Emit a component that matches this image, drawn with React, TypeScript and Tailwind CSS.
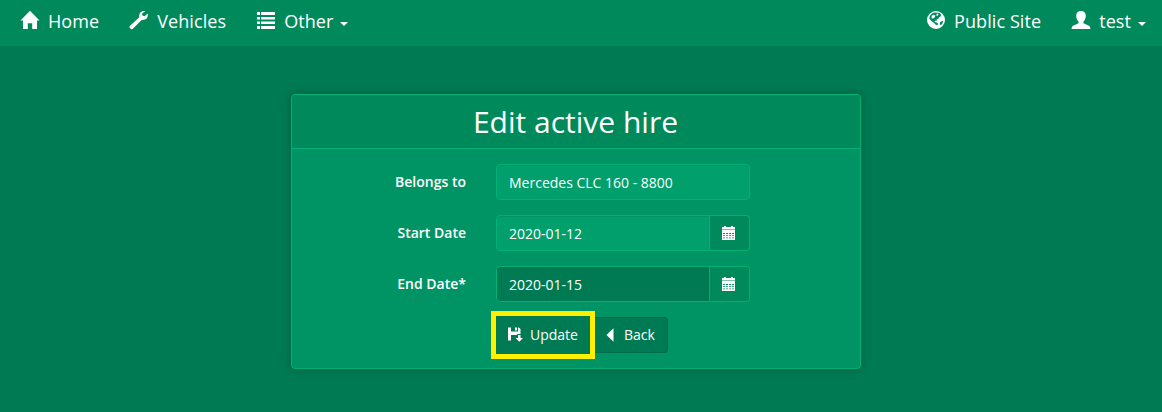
import type { ReactNode } from 'react';

type IconProps = { className?: string };

const HomeIcon = ({ className }: IconProps) => (
  <svg className={className} width="20" height="20" viewBox="0 0 20 20" fill="currentColor">
    <path d="M10 .8 19.5 10.6H17V19H12.2V13.3H7.8V19H3V10.6H.5Z" />
  </svg>
);

const WrenchIcon = ({ className }: IconProps) => (
  <svg className={className} width="20" height="20" viewBox="0 0 20 20" fill="currentColor">
    <path d="M16.2 1.3C13.7.4 11 2 10.4 4.4 10.1 5.8 10.5 7 10.1 7.6L.8 16.1C.3 16.6.3 17.3.8 17.8L1.9 18.9C2.4 19.4 3.1 19.4 3.6 18.9L12.1 10.6C13 9.8 14.4 10.1 15.9 9.600 18.1 8.8 19.4 6 18.6 3.500L15.6 6.2 13.3 5.4 13.1 3.500Z" />
  </svg>
);

const ListIcon = ({ className }: IconProps) => (
  <svg className={className} width="20" height="20" viewBox="0 0 20 20" fill="currentColor">
    <path d="M1 2h3v3H1zM5 2h14v3H5zM1 7h3v2.4H1zM5 7h14v2.4H5zM1 11.6h3V14H1zM5 11.6h14V14H5zM1 16h3v3H1zM5 16h14v3H5z" />
  </svg>
);

const GlobeIcon = ({ className }: IconProps) => (
  <svg className={className} width="20" height="20" viewBox="0 0 20 20" fill="currentColor">
    <path
      fillRule="evenodd"
      d="M10 1a9 9 0 1 0 0 18A9 9 0 0 0 10 1ZM5.200 4.200 7.500 2.800 10 2.400 13.500 3.100 15.200 4.800 14.600 6.600 12.900 7.400 12.500 8.800 10.700 9.200 11 10.600 9 10.700 8.600 12.100 10.500 12.500 12.200 13.800 11.400 15.200 9.800 14.800 7.600 12.600 5.300 11 3.400 8.600 3.700 6.200ZM14 12.200 16.700 10.800 17.300 11.400 16.300 13.600 14.800 15.200 13.800 14.200Z"
    />
    <path d="m5.800 5.500 2.200-.8 1.500.8-.9 2.100-1.900 1.100-1.200-.8ZM10.600 3.600l1.900.4-.8 2-1.300-.5Z" />
  </svg>
);

const UserIcon = ({ className }: IconProps) => (
  <svg className={className} width="20" height="20" viewBox="0 0 20 20" fill="currentColor">
    <path d="M10 1C7 1 5.200 3 5.200 5.700c0 2 .8 4.400 2.100 5.700.6.7.5 1.800-.3 2.200L2.100 15.700C1 16.200.7 17.400.5 19h19c-.2-1.600-.5-2.800-1.600-3.300L13 13.600c-.8-.4-.9-1.500-.3-2.200 1.300-1.300 2.100-3.700 2.100-5.700C14.800 3 13 1 10 1Z" />
  </svg>
);

const CalendarIcon = () => (
  <svg width="14" height="14" viewBox="0 0 14 14" fill="currentColor">
    <path d="M2 0h2v1h5V0h2v1h2v2H0V1h2z" />
    <path fillOpacity=".5" d="M0 3h13v1H0z" />
    <path
      fillRule="evenodd"
      d="M0 4h13v10H0zM1 7v1h2V7zM4 7v1h2V7zM7 7v1h2V7zM10 7v1h2V7zM1 9.200v.8h2v-.8zM4 9.200v.8h2v-.8zM7 9.200v.8h2v-.8zM10 9.200v.8h2v-.8zM1 11.400v.8h2v-.8zM4 11.400v.8h2v-.8zM7 11.400v.8h2v-.8zM10 11.400v.8h2v-.8z"
    />
  </svg>
);

const SaveIcon = () => (
  <svg className="-mt-0.5" width="15" height="15" viewBox="0 0 15 15" fill="currentColor">
    <path d="M0 .5h3v4h7v-4h.8L12.500 2v5H9.200v1H3v5.500H0zM7 .5h2v3H7z" />
    <path d="M10 8h2.500v3H15l-3.700 3.700L7.600 11H10z" />
  </svg>
);

const BackIcon = () => (
  <svg className="-mt-px" width="8" height="14" viewBox="0 0 8 14" fill="currentColor">
    <path d="M.5 7 7.500.3v13.400Z" />
  </svg>
);

const Caret = () => (
  <span className="ml-[7px] mt-[6px] border-x-4 border-t-4 border-x-transparent border-t-white" />
);

const NavItem = ({ icon, label, caret }: { icon: ReactNode; label: string; caret?: boolean }) => (
  <a href="#" className="flex items-center px-[15px] text-white">
    {icon}
    <span className="ml-2 leading-[26px] tracking-[0.08px]">{label}</span>
    {caret && <Caret />}
  </a>
);

const Row = ({ label, children }: { label: string; children: ReactNode }) => (
  <div className="mb-[15px] flex h-9">
    <label className="w-[174px] pt-[7px] text-right font-semibold leading-[22px]">{label}</label>
    <div className="ml-[30px] flex w-[254px]">{children}</div>
  </div>
);

const DateField = ({ value, dark }: { value: string; dark?: boolean }) => (
  <>
    <div
      className={`h-9 w-[214px] rounded-l border border-[#00b074] px-3 pt-2 leading-5 shadow-[inset_0_1px_1px_rgba(0,0,0,0.075)] ${
        dark ? 'bg-[#007a52]' : 'bg-[#009f6b]'
      }`}
    >
      {value}
    </div>
    <button
      type="button"
      className="flex h-9 w-10 items-center justify-start rounded-r border border-l-0 border-[#00b074] bg-[#008a5c] pl-3"
    >
      <CalendarIcon />
    </button>
  </>
);

export default function App() {
  return (
    <div className="min-h-[412px] bg-[#007a52] font-['Open_Sans',sans-serif] text-sm text-white">
      <nav className="flex h-[46px] justify-between bg-[#008a5c] pb-[5px] pl-[5px] pr-px text-lg">
        <div className="flex">
          <NavItem icon={<HomeIcon className="-mt-0.5" />} label="Home" />
          <NavItem icon={<WrenchIcon className="-mt-0.5" />} label="Vehicles" />
          <NavItem icon={<ListIcon className="-mt-0.5" />} label="Other" caret />
        </div>
        <div className="flex">
          <NavItem icon={<GlobeIcon className="-mt-0.5" />} label="Public Site" />
          <NavItem icon={<UserIcon className="-mt-0.5" />} label="test" caret />
        </div>
      </nav>

      <main className="ml-[291px] mt-12 h-[275px] w-[570px] rounded border border-[#00b074] bg-[#009464] shadow-[0_0_10px_rgba(0,0,0,0.22)]">
        <header className="h-[54px] rounded-t-[3px] border-b border-[#00b074] bg-[#008a5c] pr-px pt-[10px] text-center">
          <h1 className="text-[30px] leading-[33px]">Edit active hire</h1>
        </header>
        <form className="pt-[15px]">
          <Row label="Belongs to">
            <div className="h-9 w-full rounded border border-[#00b074] bg-[#009f6b] px-3 pt-2 leading-5 shadow-[inset_0_1px_1px_rgba(0,0,0,0.075)]">
              Mercedes CLC 160 - 8800
            </div>
          </Row>
          <Row label="Start Date">
            <DateField value="2020-01-12" />
          </Row>
          <Row label="End Date*">
            <DateField value="2020-01-15" dark />
          </Row>
          <div className="-mt-[6px] ml-[199px] flex items-center">
            <div className="border-[5px] border-[#fff000] bg-[#007a52]">
              <button
                type="button"
                className="flex h-[38px] w-[94px] items-center bg-[#007a52] pl-3"
              >
                <SaveIcon />
                <span className="ml-[7px]">Update</span>
              </button>
            </div>
            <button
              type="button"
              className="flex h-9 w-[73px] items-center rounded-r border border-l-0 border-[#006b47] bg-[#007a52] pl-[11px]"
            >
              <BackIcon />
              <span className="ml-[10px]">Back</span>
            </button>
          </div>
        </form>
      </main>
    </div>
  );
}
